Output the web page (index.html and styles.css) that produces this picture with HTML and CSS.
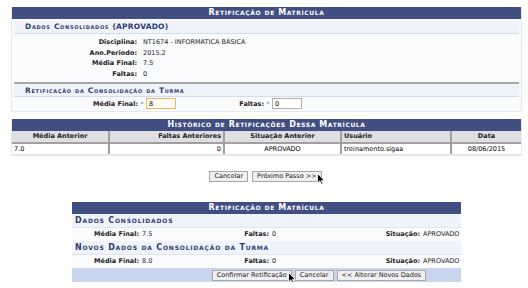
FILE: index.html
```html
<!DOCTYPE html>
<html>
<head>
	<title>Retificação de Matrícula</title>
	<meta charset="UTF-8">
	<link rel="stylesheet" href="styles.css">
</head>
<body>
	<div class="page">
		<div class="formulario">
			<div class="caption">Retificação de Matrícula</div>
			<div class="sub">Dados Consolidados <span class="up">(APROVADO)</span></div>
			<div class="info">
				<span class="lbl">Disciplina:</span><span>NT1674 - INFORMÁTICA BÁSICA</span>
				<span class="lbl">Ano.Periodo:</span><span>2015.2</span>
				<span class="lbl">Média Final:</span><span>7.5</span>
				<span class="lbl">Faltas:</span><span>0</span>
			</div>
			<div class="sub sep">Retificação da Consolidação da Turma</div>
			<div class="inputs">
				<span class="lbl">Média Final:</span>
				<span class="field"><i class="req">*</i><input class="focus" type="text" value="8"></span>
				<span class="lbl">Faltas:</span>
				<span class="field"><i class="req">*</i><input type="text" value="0"></span>
			</div>
		</div>

		<div class="listagem">
			<div class="caption">Histórico de Retificações Dessa Matrícula</div>
			<div class="grid head">
				<span class="center">Média Anterior</span>
				<span class="right">Faltas Anteriores</span>
				<span class="center">Situação Anterior</span>
				<span>Usuário</span>
				<span class="center">Data</span>
			</div>
			<div class="grid row">
				<span>7.0</span>
				<span class="right">0</span>
				<span class="center">APROVADO</span>
				<span>treinamento.sigaa</span>
				<span class="center">08/06/2015</span>
			</div>
		</div>

		<div class="actions">
			<button type="button">Cancelar</button>
			<button type="button" class="cursor-host">Próximo Passo &gt;&gt;
				<svg class="cursor c-a" width="8" height="12" viewBox="0 0 8 12"><path d="M0.5 0.5 L0.5 10 L2.8 7.8 L4.4 11.3 L5.8 10.7 L4.3 7.4 L7.3 7.4 Z" fill="#000" stroke="#fff" stroke-width="0.8"/></svg>
			</button>
		</div>

		<div class="confirma">
			<div class="caption">Retificação de Matrícula</div>
			<div class="sub">Dados Consolidados</div>
			<div class="resumo">
				<span class="lbl">Média Final:</span><span>7.5</span>
				<span class="lbl">Faltas:</span><span>0</span>
				<span class="lbl">Situação:</span><span>APROVADO</span>
			</div>
			<div class="sub">Novos Dados da Consolidação da Turma</div>
			<div class="resumo">
				<span class="lbl">Média Final:</span><span>8.0</span>
				<span class="lbl">Faltas:</span><span>0</span>
				<span class="lbl">Situação:</span><span>APROVADO</span>
			</div>
			<div class="foot">
				<button type="button" class="cursor-host">Confirmar Retificação
					<svg class="cursor c-b" width="8" height="12" viewBox="0 0 8 12"><path d="M0.5 0.5 L0.5 10 L2.8 7.8 L4.4 11.3 L5.8 10.7 L4.3 7.4 L7.3 7.4 Z" fill="#000" stroke="#fff" stroke-width="0.8"/></svg>
				</button>
				<button type="button">Cancelar</button>
				<button type="button">&lt;&lt; Alterar Novos Dados</button>
			</div>
		</div>
	</div>
</body>
</html>
```

FILE: styles.css
```css
body {
	margin: 0;
	background: #fff;
	font-family: "DejaVu Sans", Verdana, sans-serif;
	font-size: 6.5px;
	color: #222;
}

.page {
	width: 511px;
	margin-left: 11px;
	padding-top: 7px;
}

.caption {
	background: #404e82;
	color: #fff;
	font-weight: bold;
	font-variant: small-caps;
	font-size: 8px;
	letter-spacing: 0.6px;
	text-align: center;
	height: 12px;
	line-height: 12px;
}

.formulario {
	background: #f9fbfd;
	border: 1px solid #e4e9f2;
	border-top: none;
	padding-bottom: 2px;
}

.sub {
	background: #eff3fa;
	color: #2c3c74;
	font-weight: bold;
	font-variant: small-caps;
	font-size: 7.5px;
	letter-spacing: 0.7px;
	height: 12px;
	line-height: 12px;
	padding-left: 11px;
	margin: 2px 2px 0;
	border-bottom: 1px solid #d3dcec;
}

.sub .up {
	letter-spacing: 0.2px;
}

.sub.sep {
	margin-top: 0;
	border-top: 2px solid #a8a8a8;
	padding-top: 1px;
	height: 11px;
}

.lbl {
	font-weight: bold;
	text-align: right;
}

.info {
	display: grid;
	grid-template-columns: 125px 1fr;
	grid-auto-rows: 10.5px;
	column-gap: 6px;
	line-height: 10.5px;
	padding: 3px 0 3px;
}

.inputs {
	display: grid;
	grid-template-columns: 126px 88px 38px 1fr;
	align-items: center;
	padding-top: 1px;
}

.field {
	display: flex;
	align-items: center;
}

.req {
	color: #3a6fd0;
	font-style: normal;
	font-size: 6px;
	width: 6px;
	text-align: center;
	margin: 0 1px;
}

input {
	width: 30px;
	height: 11px;
	box-sizing: border-box;
	border: 1px solid #b0b0b0;
	font: inherit;
	padding: 0 2px;
	background: #fff;
}

input.focus {
	border-color: #f0b25a;
	background: #fffdf2;
}

.listagem {
	margin-top: 7px;
	border: 1px solid #e4e9f2;
	border-top: none;
}

.grid {
	display: grid;
	grid-template-columns: 98px 115px 117px 110px 1fr;
}

.grid span {
	padding: 0 2px;
	border-right: 2px solid #a0a0a0;
	white-space: nowrap;
}

.grid span:last-child {
	border-right: none;
}

.head {
	background: #dedfe3;
	font-weight: bold;
	line-height: 11px;
	border-bottom: 2px solid #a0a0a0;
}

.row {
	color: #000;
	background: #fff;
	line-height: 10px;
	border-bottom: 1px solid #e4e4e4;
}

.right { text-align: right; }
.center { text-align: center; }

.actions {
	display: flex;
	justify-content: center;
	gap: 4px;
	margin-top: 15px;
	padding-right: 2px;
}

button {
	font: inherit;
	color: #222;
	background: #f0f0f0;
	border: 1px solid #a6a6a6;
	height: 11px;
	padding: 0 4px;
	line-height: 9px;
}

.cursor-host {
	position: relative;
}

.cursor {
	position: absolute;
}

.c-a {
	left: 64px;
	top: 1px;
}

.c-b {
	left: 75px;
	top: 1px;
}

.confirma {
	width: 389px;
	margin: 20px 0 0 61px;
	background: #f9fbfd;
}

.confirma .sub {
	margin: 0;
	padding-left: 3px;
	height: 13px;
	line-height: 13px;
	font-size: 8px;
	letter-spacing: 0.8px;
	border-bottom: 1px solid #dfe6f2;
}

.resumo {
	display: grid;
	grid-template-columns: 70px 70px 60px 90px 61px 38px;
	height: 13px;
	line-height: 13px;
	background: #fbfcfe;
}

.resumo .lbl {
	padding-right: 3px;
}

.foot {
	background: #c8d5ec;
	height: 14px;
	display: flex;
	justify-content: center;
	align-items: center;
	gap: 3px;
	padding-left: 105px;
}
```
